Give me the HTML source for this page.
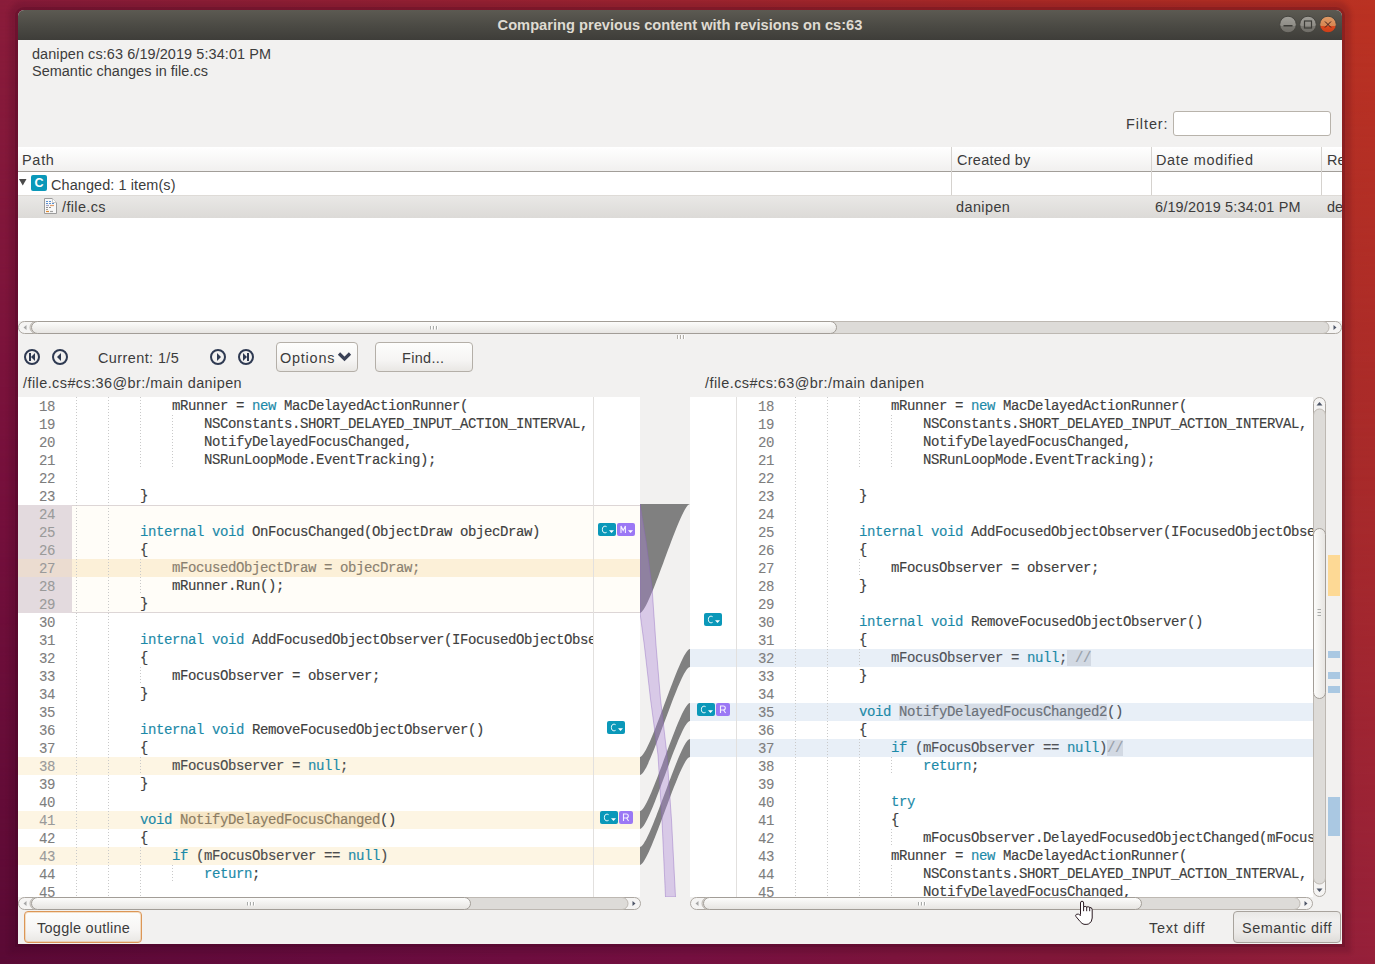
<!DOCTYPE html>
<html><head><meta charset="utf-8">
<style>
*{box-sizing:border-box}
html,body{margin:0;padding:0;width:1375px;height:964px;overflow:hidden}
body{position:relative;font-family:"Liberation Sans",sans-serif;font-size:14.45px;color:#3c3c3c;
 background:linear-gradient(90deg,#5a0a35 0%,#660c3e 25%,#741040 50%,#821838 80%,#96203a 100%)}
#bgm{position:absolute;left:0;top:0;width:1375px;height:964px;background:linear-gradient(90deg,#76103c 0%,#8a1a3a 45%,#9c2430 75%,#a82a2a 100%);
 -webkit-mask-image:linear-gradient(#000 0%,#000 50%,transparent 100%)}
#bgt{position:absolute;left:0;top:0;width:1375px;height:964px;background:linear-gradient(90deg,#8a1c3a 0%,#a22630 50%,#b02c26 75%,#ba3222 100%);
 -webkit-mask-image:linear-gradient(#000 0%,transparent 50%)}
.a{position:absolute;white-space:pre}
#win{position:absolute;left:18px;top:10px;width:1324px;height:934px;background:#f2f1f0;border-radius:6px 6px 0 0;overflow:hidden;
 box-shadow:0 0 0 3px rgba(50,0,20,.18),0 0 4px 9px rgba(50,0,30,.16)}
#title{position:absolute;left:0;top:0;width:1324px;height:30px;background:linear-gradient(#5c5a52,#4c4b45 50%,#3e3d39);}
#title .t{position:absolute;left:0;width:1324px;top:7px;text-align:center;font-weight:bold;font-size:14.66px;color:#dfdbd2;line-height:16px}
.wb{position:absolute;top:7px;width:17px;height:17px;border-radius:50%;border:1px solid #3a3935}
.code,.ln{position:absolute;font-family:"Liberation Mono",monospace;font-size:14px;letter-spacing:-0.4px;line-height:18px;height:18px;white-space:pre;color:#404040;-webkit-text-stroke:0.15px currentColor}
.ln{width:40px;text-align:right;color:#7d7d7d;-webkit-text-stroke:0.1px currentColor}
.lnc{color:#9a9a9a}
.kw{color:#1c8aa8}
.dim{color:#8a8070}
.dimb{color:#505359}
.dimy{color:#4c4c4c}
.hly{background:#f6e6c6;color:#8c7c62}
.hlb{background:#d6dde7;color:#6a7079}
.hlb2{background:#d2d9e3;color:#98a0aa}
.gd{position:absolute;width:1px;height:18px;background:repeating-linear-gradient(#c9c9c9 0 1px,transparent 1px 3px)}
.bgy{position:absolute;height:18px;background:#fdf5e3}
.bgb{position:absolute;height:18px;background:#e8eff7}
.bgy2{position:absolute;height:18px;background:#fcf0d8}
.badge{position:absolute;height:13px;border-radius:2px;color:#fff;font-family:"Liberation Mono",monospace;font-size:11px;line-height:13px}
.bc{background:#0a98b9}
.bm{background:#9b78f5}
.btn{position:absolute;border:1px solid #b4afa8;border-radius:4px;background:linear-gradient(#fdfdfc,#f6f5f4 60%,#e9e7e4)}
.hs{position:absolute;height:13px;border:1px solid #b0aba5;border-radius:7px;background:#dcdad7}
.hs .th{position:absolute;top:-1px;height:13px;border:1px solid #aaa59f;border-radius:7px;background:linear-gradient(#fbfbfa,#ecebe9)}
.hs .arr{position:absolute;top:-1px;height:13px;width:20px;border:1px solid #b8b3ad;background:#f4f3f2}
</style></head><body>
<div id="bgm"></div>
<div id="bgt"></div>
<div id="win">
 <div id="title"><div class="t">Comparing previous content with revisions on cs:63</div>
  <svg class="a" style="left:1258px;top:3px" width="66" height="22" viewBox="0 0 66 22">
  <defs><linearGradient id="gb" x1="0" y1="0" x2="0" y2="1"><stop offset="0" stop-color="#a09e98"/><stop offset="0.6" stop-color="#8e8c86"/><stop offset="0.62" stop-color="#7a7872"/><stop offset="1" stop-color="#6e6c66"/></linearGradient>
  <linearGradient id="gc" x1="0" y1="0" x2="0" y2="1"><stop offset="0" stop-color="#e09a66"/><stop offset="0.58" stop-color="#d68652"/><stop offset="0.62" stop-color="#d94a1f"/><stop offset="1" stop-color="#cc3c17"/></linearGradient></defs>
  <circle cx="12" cy="11.5" r="8.3" fill="url(#gb)" stroke="#45443f" stroke-width="1"/>
  <rect x="7.5" y="12" width="9" height="1.5" fill="#3d3c38"/>
  <circle cx="32" cy="11.5" r="8.3" fill="url(#gb)" stroke="#45443f" stroke-width="1"/>
  <rect x="28.5" y="8" width="7" height="7" fill="none" stroke="#3d3c38" stroke-width="1.2"/>
  <circle cx="52" cy="11.5" r="8.3" fill="url(#gc)" stroke="#45443f" stroke-width="1"/>
  <path d="M49 8.5L55 14.5M55 8.5L49 14.5" stroke="#3a1a1a" stroke-width="1"/>
 </svg>
</div>
</div>

<!-- header text -->
<div class="a" style="left:32px;top:46px;line-height:17px;letter-spacing:0.091px">danipen cs:63 6/19/2019 5:34:01 PM</div>
<div class="a" style="left:32px;top:63px;line-height:17px;letter-spacing:0.038px">Semantic changes in file.cs</div>
<div class="a" style="left:1126px;top:116px;line-height:17px;letter-spacing:0.917px">Filter:</div>
<div class="a" style="left:1173px;top:111px;width:158px;height:25px;background:#fff;border:1px solid #b8b3ab;border-radius:3px"></div>

<!-- table -->
<div class="a" style="left:18px;top:147px;width:1324px;height:174px;background:#fff"></div>
<div class="a" style="left:18px;top:147px;width:1324px;height:25px;background:linear-gradient(#ffffff,#f1f0ef);border-bottom:1px solid #a29e99"></div>
<div class="a" style="left:951px;top:147px;width:1px;height:71px;background:#d5d2ce"></div>
<div class="a" style="left:1151px;top:147px;width:1px;height:71px;background:#d5d2ce"></div>
<div class="a" style="left:1321px;top:147px;width:1px;height:71px;background:#d5d2ce"></div>
<div class="a" style="left:22px;top:152px;line-height:17px;letter-spacing:0.733px">Path</div>
<div class="a" style="left:957px;top:152px;line-height:17px;letter-spacing:0.300px">Created by</div>
<div class="a" style="left:1156px;top:152px;line-height:17px;letter-spacing:0.667px">Date modified</div>
<div class="a" style="left:1327px;top:152px;line-height:17px;width:15px;overflow:hidden">Re</div>
<div class="a" style="left:18px;top:195px;width:1324px;height:1px;background:#dedbd7"></div>
<div class="a" style="left:18px;top:196px;width:1324px;height:22px;background:linear-gradient(#e9e8e6,#dcdad7)"></div>
<svg class="a" style="left:18px;top:178px" width="10" height="9"><path d="M1 1H8.5L4.75 7.5Z" fill="#4a4a4a"/></svg>
<div class="a" style="left:31px;top:175px;width:16px;height:16px;background:#0a98b9;border-radius:2px;color:#fff;font-weight:bold;font-size:12.5px;line-height:16px;text-align:center">C</div>
<div class="a" style="left:51px;top:177px;line-height:17px;letter-spacing:0.100px">Changed: 1 item(s)</div>
<svg class="a" style="left:44px;top:198px" width="13" height="17"><path d="M0.5 0.5H8.5L12.5 4.5V15.5H0.5Z" fill="#f8f8f8" stroke="#9c9c9c"/><path d="M8.5 0.5V4.5H12.5" fill="#fff" stroke="#c8c8c8"/>
 <g stroke-width="1.2"><path d="M2 3.5h2M5 3.5h2" stroke="#5b8fd0"/><path d="M2 5.5h2M5 5.5h2M8 5.5h2" stroke="#5b8fd0"/><path d="M2 7.5h3" stroke="#a8a8c8"/><path d="M6 7.5h4" stroke="#e0a070"/><path d="M2 9.5h2M5 9.5h2" stroke="#909090"/><path d="M2 11.5h2" stroke="#a0a0a0"/><path d="M2 13.5h3" stroke="#e08a30"/><path d="M6 13.5h3" stroke="#a0a0a0"/></g></svg>
<div class="a" style="left:62px;top:199px;line-height:17px;letter-spacing:0.371px">/file.cs</div>
<div class="a" style="left:956px;top:199px;line-height:17px;letter-spacing:0.417px">danipen</div>
<div class="a" style="left:1155px;top:199px;line-height:17px;letter-spacing:0.179px">6/19/2019 5:34:01 PM</div>
<div class="a" style="left:1327px;top:199px;line-height:17px;width:15px;overflow:hidden">de</div>

<svg class="a" style="left:676px;top:334px" width="10" height="6"><g fill="#b1ada7"><rect x="1" y="1" width="1" height="4"/><rect x="4" y="1" width="1" height="4"/><rect x="7" y="1" width="1" height="4"/></g><g fill="#fff"><rect x="2" y="1" width="1" height="4"/><rect x="5" y="1" width="1" height="4"/><rect x="8" y="1" width="1" height="4"/></g></svg>
<!-- toolbar -->
<svg class="a" style="left:20px;top:345px" width="270" height="24" viewBox="0 0 270 24">
 <g fill="none" stroke="#2f3a52" stroke-width="2"><circle cx="12" cy="12" r="7"/><circle cx="40" cy="12" r="7"/><circle cx="198" cy="12" r="7"/><circle cx="226" cy="12" r="7"/></g>
 <g fill="#2f3a52"><rect x="9" y="8" width="2" height="8"/><path d="M15 8v8l-4-4z"/><path d="M41 8v8l-4-4z"/><path d="M197 8v8l4-4z"/><path d="M223 8v8l4-4z"/><rect x="227" y="8" width="2" height="8"/></g>
</svg>
<div class="a" style="left:98px;top:350px;line-height:17px;letter-spacing:0.418px">Current: 1/5</div>
<div class="btn" style="left:276px;top:342px;width:82px;height:30px"></div>
<div class="a" style="left:280px;top:350px;line-height:17px;letter-spacing:0.783px">Options</div>
<svg class="a" style="left:336px;top:349px" width="18" height="14"><path d="M3 4.5L8.5 10L14 4.5" fill="none" stroke="#3a4156" stroke-width="3.2"/></svg>
<div class="btn" style="left:375px;top:342px;width:98px;height:30px"></div>
<div class="a" style="left:402px;top:350px;line-height:17px;letter-spacing:0.333px">Find...</div>

<div class="a" style="left:23px;top:375px;line-height:17px;letter-spacing:0.433px">/file.cs#cs:36@br:/main danipen</div>
<div class="a" style="left:705px;top:375px;line-height:17px;letter-spacing:0.447px">/file.cs#cs:63@br:/main danipen</div>

<!-- left pane -->
<div class="a" style="left:18px;top:397px;width:622px;height:500px;background:#fff;overflow:hidden">
</div>
<div class="a" style="left:18px;top:505px;width:622px;height:108px;background:#fffdf8;border-top:1px solid #ddd6d6;border-bottom:1px solid #ddd6d6"></div>
<div class="a" style="left:18px;top:505px;width:54px;height:108px;background:#e3dade"></div>
<div class="a" style="left:18px;top:559px;width:54px;height:18px;background:#ebdcd0"></div>
<div id="lp" class="a" style="left:0;top:0;width:640px;height:897px;overflow:hidden;clip-path:inset(397px 0 0 18px)">
<div class="bgy2" style="top:559px;left:72px;width:568px"></div>
<div class="bgy" style="top:757px;left:18px;width:622px"></div>
<div class="bgy" style="top:811px;left:18px;width:622px"></div>
<div class="bgy" style="top:847px;left:18px;width:622px"></div>
<div class="gd" style="top:397px;left:76px"></div>
<div class="gd" style="top:397px;left:108px"></div>
<div class="gd" style="top:397px;left:140px"></div>
<div class="gd" style="top:415px;left:76px"></div>
<div class="gd" style="top:415px;left:108px"></div>
<div class="gd" style="top:415px;left:140px"></div>
<div class="gd" style="top:415px;left:172px"></div>
<div class="gd" style="top:433px;left:76px"></div>
<div class="gd" style="top:433px;left:108px"></div>
<div class="gd" style="top:433px;left:140px"></div>
<div class="gd" style="top:433px;left:172px"></div>
<div class="gd" style="top:451px;left:76px"></div>
<div class="gd" style="top:451px;left:108px"></div>
<div class="gd" style="top:451px;left:140px"></div>
<div class="gd" style="top:451px;left:172px"></div>
<div class="gd" style="top:469px;left:76px"></div>
<div class="gd" style="top:469px;left:108px"></div>
<div class="gd" style="top:487px;left:76px"></div>
<div class="gd" style="top:487px;left:108px"></div>
<div class="gd" style="top:505px;left:76px"></div>
<div class="gd" style="top:505px;left:108px"></div>
<div class="gd" style="top:523px;left:76px"></div>
<div class="gd" style="top:523px;left:108px"></div>
<div class="gd" style="top:541px;left:76px"></div>
<div class="gd" style="top:541px;left:108px"></div>
<div class="gd" style="top:559px;left:76px"></div>
<div class="gd" style="top:559px;left:108px"></div>
<div class="gd" style="top:559px;left:140px"></div>
<div class="gd" style="top:577px;left:76px"></div>
<div class="gd" style="top:577px;left:108px"></div>
<div class="gd" style="top:577px;left:140px"></div>
<div class="gd" style="top:595px;left:76px"></div>
<div class="gd" style="top:595px;left:108px"></div>
<div class="gd" style="top:613px;left:76px"></div>
<div class="gd" style="top:613px;left:108px"></div>
<div class="gd" style="top:631px;left:76px"></div>
<div class="gd" style="top:631px;left:108px"></div>
<div class="gd" style="top:649px;left:76px"></div>
<div class="gd" style="top:649px;left:108px"></div>
<div class="gd" style="top:667px;left:76px"></div>
<div class="gd" style="top:667px;left:108px"></div>
<div class="gd" style="top:667px;left:140px"></div>
<div class="gd" style="top:685px;left:76px"></div>
<div class="gd" style="top:685px;left:108px"></div>
<div class="gd" style="top:703px;left:76px"></div>
<div class="gd" style="top:703px;left:108px"></div>
<div class="gd" style="top:721px;left:76px"></div>
<div class="gd" style="top:721px;left:108px"></div>
<div class="gd" style="top:739px;left:76px"></div>
<div class="gd" style="top:739px;left:108px"></div>
<div class="gd" style="top:757px;left:76px"></div>
<div class="gd" style="top:757px;left:108px"></div>
<div class="gd" style="top:757px;left:140px"></div>
<div class="gd" style="top:775px;left:76px"></div>
<div class="gd" style="top:775px;left:108px"></div>
<div class="gd" style="top:793px;left:76px"></div>
<div class="gd" style="top:793px;left:108px"></div>
<div class="gd" style="top:811px;left:76px"></div>
<div class="gd" style="top:811px;left:108px"></div>
<div class="gd" style="top:829px;left:76px"></div>
<div class="gd" style="top:829px;left:108px"></div>
<div class="gd" style="top:847px;left:76px"></div>
<div class="gd" style="top:847px;left:108px"></div>
<div class="gd" style="top:847px;left:140px"></div>
<div class="gd" style="top:865px;left:76px"></div>
<div class="gd" style="top:865px;left:108px"></div>
<div class="gd" style="top:865px;left:140px"></div>
<div class="gd" style="top:865px;left:172px"></div>
<div class="gd" style="top:883px;left:76px"></div>
<div class="gd" style="top:883px;left:108px"></div>
<div class="gd" style="top:883px;left:140px"></div>
<div class="ln" style="top:398px;left:15px">18</div>
<div class="code" style="top:397px;left:76px;width:517px;overflow:hidden">            mRunner = <span class="kw">new</span> MacDelayedActionRunner(</div>
<div class="ln" style="top:416px;left:15px">19</div>
<div class="code" style="top:415px;left:76px;width:517px;overflow:hidden">                NSConstants.SHORT_DELAYED_INPUT_ACTION_INTERVAL,</div>
<div class="ln" style="top:434px;left:15px">20</div>
<div class="code" style="top:433px;left:76px;width:517px;overflow:hidden">                NotifyDelayedFocusChanged,</div>
<div class="ln" style="top:452px;left:15px">21</div>
<div class="code" style="top:451px;left:76px;width:517px;overflow:hidden">                NSRunLoopMode.EventTracking);</div>
<div class="ln" style="top:470px;left:15px">22</div>
<div class="code" style="top:469px;left:76px;width:517px;overflow:hidden"></div>
<div class="ln" style="top:488px;left:15px">23</div>
<div class="code" style="top:487px;left:76px;width:517px;overflow:hidden">        }</div>
<div class="ln lnc" style="top:506px;left:15px">24</div>
<div class="code" style="top:505px;left:76px;width:517px;overflow:hidden"></div>
<div class="ln lnc" style="top:524px;left:15px">25</div>
<div class="code" style="top:523px;left:76px;width:517px;overflow:hidden">        <span class="kw">internal</span> <span class="kw">void</span> OnFocusChanged(ObjectDraw objecDraw)</div>
<div class="ln lnc" style="top:542px;left:15px">26</div>
<div class="code" style="top:541px;left:76px;width:517px;overflow:hidden">        {</div>
<div class="ln lnc" style="top:560px;left:15px">27</div>
<div class="code dim" style="top:559px;left:76px;width:517px;overflow:hidden">            mFocusedObjectDraw = objecDraw;</div>
<div class="ln lnc" style="top:578px;left:15px">28</div>
<div class="code" style="top:577px;left:76px;width:517px;overflow:hidden">            mRunner.Run();</div>
<div class="ln lnc" style="top:596px;left:15px">29</div>
<div class="code" style="top:595px;left:76px;width:517px;overflow:hidden">        }</div>
<div class="ln" style="top:614px;left:15px">30</div>
<div class="code" style="top:613px;left:76px;width:517px;overflow:hidden"></div>
<div class="ln" style="top:632px;left:15px">31</div>
<div class="code" style="top:631px;left:76px;width:517px;overflow:hidden">        <span class="kw">internal</span> <span class="kw">void</span> AddFocusedObjectObserver(IFocusedObjectObserver observer)</div>
<div class="ln" style="top:650px;left:15px">32</div>
<div class="code" style="top:649px;left:76px;width:517px;overflow:hidden">        {</div>
<div class="ln" style="top:668px;left:15px">33</div>
<div class="code" style="top:667px;left:76px;width:517px;overflow:hidden">            mFocusObserver = observer;</div>
<div class="ln" style="top:686px;left:15px">34</div>
<div class="code" style="top:685px;left:76px;width:517px;overflow:hidden">        }</div>
<div class="ln" style="top:704px;left:15px">35</div>
<div class="code" style="top:703px;left:76px;width:517px;overflow:hidden"></div>
<div class="ln" style="top:722px;left:15px">36</div>
<div class="code" style="top:721px;left:76px;width:517px;overflow:hidden">        <span class="kw">internal</span> <span class="kw">void</span> RemoveFocusedObjectObserver()</div>
<div class="ln" style="top:740px;left:15px">37</div>
<div class="code" style="top:739px;left:76px;width:517px;overflow:hidden">        {</div>
<div class="ln lnc" style="top:758px;left:15px">38</div>
<div class="code dimy" style="top:757px;left:76px;width:517px;overflow:hidden">            mFocusObserver = <span class="kw">null</span>;</div>
<div class="ln" style="top:776px;left:15px">39</div>
<div class="code" style="top:775px;left:76px;width:517px;overflow:hidden">        }</div>
<div class="ln" style="top:794px;left:15px">40</div>
<div class="code" style="top:793px;left:76px;width:517px;overflow:hidden"></div>
<div class="ln lnc" style="top:812px;left:15px">41</div>
<div class="code" style="top:811px;left:76px;width:517px;overflow:hidden">        <span class="kw">void</span> <span class="hly">NotifyDelayedFocusChanged</span>()</div>
<div class="ln" style="top:830px;left:15px">42</div>
<div class="code" style="top:829px;left:76px;width:517px;overflow:hidden">        {</div>
<div class="ln lnc" style="top:848px;left:15px">43</div>
<div class="code dimy" style="top:847px;left:76px;width:517px;overflow:hidden">            <span class="kw">if</span> (mFocusObserver == <span class="kw">null</span>)</div>
<div class="ln" style="top:866px;left:15px">44</div>
<div class="code" style="top:865px;left:76px;width:517px;overflow:hidden">                <span class="kw">return</span>;</div>
<div class="ln" style="top:884px;left:15px">45</div>
<div class="code" style="top:883px;left:76px;width:517px;overflow:hidden"></div>
</div>
<div class="a" style="left:593px;top:397px;width:1px;height:500px;background:#e2e0de"></div>
<svg class="a" style="left:598px;top:523px" width="18" height="13"><rect width="18" height="13" rx="2" fill="#0a98b9"/><path d="M8.6 3.7C8.1 3.35 7.5 3.2 6.9 3.2C5.3 3.2 4.4 4.4 4.4 6.5C4.4 8.6 5.3 9.8 6.9 9.8C7.5 9.8 8.1 9.65 8.6 9.3" fill="none" stroke="#f2fbff" stroke-width="1"/><path d="M11 7.3H16L13.5 10Z" fill="#fff"/></svg>
<svg class="a" style="left:617px;top:523px" width="18" height="13"><rect width="18" height="13" rx="2" fill="#9b78f5"/><path d="M4 10V3L6.2 7.5L8.4 3V10" fill="none" stroke="#f4f0ff" stroke-width="1.1"/><path d="M11 7.3H16L13.5 10Z" fill="#fff"/></svg>
<svg class="a" style="left:607px;top:721px" width="18" height="13"><rect width="18" height="13" rx="2" fill="#0a98b9"/><path d="M8.6 3.7C8.1 3.35 7.5 3.2 6.9 3.2C5.3 3.2 4.4 4.4 4.4 6.5C4.4 8.6 5.3 9.8 6.9 9.8C7.5 9.8 8.1 9.65 8.6 9.3" fill="none" stroke="#f2fbff" stroke-width="1"/><path d="M11 7.3H16L13.5 10Z" fill="#fff"/></svg>
<svg class="a" style="left:600px;top:811px" width="18" height="13"><rect width="18" height="13" rx="2" fill="#0a98b9"/><path d="M8.6 3.7C8.1 3.35 7.5 3.2 6.9 3.2C5.3 3.2 4.4 4.4 4.4 6.5C4.4 8.6 5.3 9.8 6.9 9.8C7.5 9.8 8.1 9.65 8.6 9.3" fill="none" stroke="#f2fbff" stroke-width="1"/><path d="M11 7.3H16L13.5 10Z" fill="#fff"/></svg>
<svg class="a" style="left:619px;top:811px" width="14" height="13"><rect width="14" height="13" rx="2" fill="#9b78f5"/><path d="M4.5 10V3H7.3Q9.3 3 9.3 5Q9.3 7 7.3 7H4.5M7.5 7L9.6 10" fill="none" stroke="#f4f0ff" stroke-width="1.1"/></svg>

<!-- connector -->
<svg class="a" style="left:640px;top:397px" width="50" height="500" viewBox="640 397 50 500">
 <path d="M640 504 H690 C680 504 650 613 640 613Z" fill="#808080"/>
 <path d="M640 757 C650 757 680 649 690 649 V667 C680 667 650 775 640 775Z" fill="#808080"/>
 <path d="M640 811 C650 811 680 703 690 703 V721 C680 721 650 829 640 829Z" fill="#808080"/>
 <path d="M640 847 C650 847 680 739 690 739 V757 C680 757 650 865 640 865Z" fill="#808080"/>
 <path d="M640 504 L646 541 L652 587 L656 645 L660.5 699 L667 755 L671.5 820 L675.5 897 H665.5 L662 820 L658 755 L650.5 699 L644.3 645 L640 613Z" fill="rgba(170,130,215,0.36)" stroke="rgba(140,100,190,0.5)" stroke-width="0.8" stroke-linejoin="round"/>
</svg>
<!-- right pane -->
<div class="a" style="left:690px;top:397px;width:623px;height:500px;background:#fff"></div>
<div id="rp" class="a" style="left:0;top:0;width:1313px;height:897px;overflow:hidden;clip-path:inset(397px 0 0 690px)">
<div class="bgb" style="top:649px;left:690px;width:623px"></div>
<div class="bgb" style="top:703px;left:690px;width:623px"></div>
<div class="bgb" style="top:739px;left:690px;width:623px"></div>
<div class="gd" style="top:397px;left:795px"></div>
<div class="gd" style="top:397px;left:827px"></div>
<div class="gd" style="top:397px;left:859px"></div>
<div class="gd" style="top:415px;left:795px"></div>
<div class="gd" style="top:415px;left:827px"></div>
<div class="gd" style="top:415px;left:859px"></div>
<div class="gd" style="top:415px;left:891px"></div>
<div class="gd" style="top:433px;left:795px"></div>
<div class="gd" style="top:433px;left:827px"></div>
<div class="gd" style="top:433px;left:859px"></div>
<div class="gd" style="top:433px;left:891px"></div>
<div class="gd" style="top:451px;left:795px"></div>
<div class="gd" style="top:451px;left:827px"></div>
<div class="gd" style="top:451px;left:859px"></div>
<div class="gd" style="top:451px;left:891px"></div>
<div class="gd" style="top:469px;left:795px"></div>
<div class="gd" style="top:469px;left:827px"></div>
<div class="gd" style="top:487px;left:795px"></div>
<div class="gd" style="top:487px;left:827px"></div>
<div class="gd" style="top:505px;left:795px"></div>
<div class="gd" style="top:505px;left:827px"></div>
<div class="gd" style="top:523px;left:795px"></div>
<div class="gd" style="top:523px;left:827px"></div>
<div class="gd" style="top:541px;left:795px"></div>
<div class="gd" style="top:541px;left:827px"></div>
<div class="gd" style="top:559px;left:795px"></div>
<div class="gd" style="top:559px;left:827px"></div>
<div class="gd" style="top:559px;left:859px"></div>
<div class="gd" style="top:577px;left:795px"></div>
<div class="gd" style="top:577px;left:827px"></div>
<div class="gd" style="top:595px;left:795px"></div>
<div class="gd" style="top:595px;left:827px"></div>
<div class="gd" style="top:613px;left:795px"></div>
<div class="gd" style="top:613px;left:827px"></div>
<div class="gd" style="top:631px;left:795px"></div>
<div class="gd" style="top:631px;left:827px"></div>
<div class="gd" style="top:649px;left:795px"></div>
<div class="gd" style="top:649px;left:827px"></div>
<div class="gd" style="top:649px;left:859px"></div>
<div class="gd" style="top:667px;left:795px"></div>
<div class="gd" style="top:667px;left:827px"></div>
<div class="gd" style="top:685px;left:795px"></div>
<div class="gd" style="top:685px;left:827px"></div>
<div class="gd" style="top:703px;left:795px"></div>
<div class="gd" style="top:703px;left:827px"></div>
<div class="gd" style="top:721px;left:795px"></div>
<div class="gd" style="top:721px;left:827px"></div>
<div class="gd" style="top:739px;left:795px"></div>
<div class="gd" style="top:739px;left:827px"></div>
<div class="gd" style="top:739px;left:859px"></div>
<div class="gd" style="top:757px;left:795px"></div>
<div class="gd" style="top:757px;left:827px"></div>
<div class="gd" style="top:757px;left:859px"></div>
<div class="gd" style="top:757px;left:891px"></div>
<div class="gd" style="top:775px;left:795px"></div>
<div class="gd" style="top:775px;left:827px"></div>
<div class="gd" style="top:775px;left:859px"></div>
<div class="gd" style="top:793px;left:795px"></div>
<div class="gd" style="top:793px;left:827px"></div>
<div class="gd" style="top:793px;left:859px"></div>
<div class="gd" style="top:811px;left:795px"></div>
<div class="gd" style="top:811px;left:827px"></div>
<div class="gd" style="top:811px;left:859px"></div>
<div class="gd" style="top:829px;left:795px"></div>
<div class="gd" style="top:829px;left:827px"></div>
<div class="gd" style="top:829px;left:859px"></div>
<div class="gd" style="top:829px;left:891px"></div>
<div class="gd" style="top:847px;left:795px"></div>
<div class="gd" style="top:847px;left:827px"></div>
<div class="gd" style="top:847px;left:859px"></div>
<div class="gd" style="top:865px;left:795px"></div>
<div class="gd" style="top:865px;left:827px"></div>
<div class="gd" style="top:865px;left:859px"></div>
<div class="gd" style="top:865px;left:891px"></div>
<div class="gd" style="top:883px;left:795px"></div>
<div class="gd" style="top:883px;left:827px"></div>
<div class="gd" style="top:883px;left:859px"></div>
<div class="gd" style="top:883px;left:891px"></div>
<div class="ln" style="top:398px;left:734px">18</div>
<div class="code" style="top:397px;left:795px;width:518px;overflow:hidden">            mRunner = <span class="kw">new</span> MacDelayedActionRunner(</div>
<div class="ln" style="top:416px;left:734px">19</div>
<div class="code" style="top:415px;left:795px;width:518px;overflow:hidden">                NSConstants.SHORT_DELAYED_INPUT_ACTION_INTERVAL,</div>
<div class="ln" style="top:434px;left:734px">20</div>
<div class="code" style="top:433px;left:795px;width:518px;overflow:hidden">                NotifyDelayedFocusChanged,</div>
<div class="ln" style="top:452px;left:734px">21</div>
<div class="code" style="top:451px;left:795px;width:518px;overflow:hidden">                NSRunLoopMode.EventTracking);</div>
<div class="ln" style="top:470px;left:734px">22</div>
<div class="code" style="top:469px;left:795px;width:518px;overflow:hidden"></div>
<div class="ln" style="top:488px;left:734px">23</div>
<div class="code" style="top:487px;left:795px;width:518px;overflow:hidden">        }</div>
<div class="ln" style="top:506px;left:734px">24</div>
<div class="code" style="top:505px;left:795px;width:518px;overflow:hidden"></div>
<div class="ln" style="top:524px;left:734px">25</div>
<div class="code" style="top:523px;left:795px;width:518px;overflow:hidden">        <span class="kw">internal</span> <span class="kw">void</span> AddFocusedObjectObserver(IFocusedObjectObserver observer)</div>
<div class="ln" style="top:542px;left:734px">26</div>
<div class="code" style="top:541px;left:795px;width:518px;overflow:hidden">        {</div>
<div class="ln" style="top:560px;left:734px">27</div>
<div class="code" style="top:559px;left:795px;width:518px;overflow:hidden">            mFocusObserver = observer;</div>
<div class="ln" style="top:578px;left:734px">28</div>
<div class="code" style="top:577px;left:795px;width:518px;overflow:hidden">        }</div>
<div class="ln" style="top:596px;left:734px">29</div>
<div class="code" style="top:595px;left:795px;width:518px;overflow:hidden"></div>
<div class="ln" style="top:614px;left:734px">30</div>
<div class="code" style="top:613px;left:795px;width:518px;overflow:hidden">        <span class="kw">internal</span> <span class="kw">void</span> RemoveFocusedObjectObserver()</div>
<div class="ln" style="top:632px;left:734px">31</div>
<div class="code" style="top:631px;left:795px;width:518px;overflow:hidden">        {</div>
<div class="ln" style="top:650px;left:734px">32</div>
<div class="code dimb" style="top:649px;left:795px;width:518px;overflow:hidden">            mFocusObserver = <span class="kw">null</span>;<span class="hlb2"> //</span></div>
<div class="ln" style="top:668px;left:734px">33</div>
<div class="code" style="top:667px;left:795px;width:518px;overflow:hidden">        }</div>
<div class="ln" style="top:686px;left:734px">34</div>
<div class="code" style="top:685px;left:795px;width:518px;overflow:hidden"></div>
<div class="ln" style="top:704px;left:734px">35</div>
<div class="code dimb" style="top:703px;left:795px;width:518px;overflow:hidden">        <span class="kw">void</span> <span class="hlb">NotifyDelayedFocusChanged2</span>()</div>
<div class="ln" style="top:722px;left:734px">36</div>
<div class="code" style="top:721px;left:795px;width:518px;overflow:hidden">        {</div>
<div class="ln" style="top:740px;left:734px">37</div>
<div class="code dimb" style="top:739px;left:795px;width:518px;overflow:hidden">            <span class="kw">if</span> (mFocusObserver == <span class="kw">null</span>)<span class="hlb2">//</span></div>
<div class="ln" style="top:758px;left:734px">38</div>
<div class="code" style="top:757px;left:795px;width:518px;overflow:hidden">                <span class="kw">return</span>;</div>
<div class="ln" style="top:776px;left:734px">39</div>
<div class="code" style="top:775px;left:795px;width:518px;overflow:hidden"></div>
<div class="ln" style="top:794px;left:734px">40</div>
<div class="code" style="top:793px;left:795px;width:518px;overflow:hidden">            <span class="kw">try</span></div>
<div class="ln" style="top:812px;left:734px">41</div>
<div class="code" style="top:811px;left:795px;width:518px;overflow:hidden">            {</div>
<div class="ln" style="top:830px;left:734px">42</div>
<div class="code" style="top:829px;left:795px;width:518px;overflow:hidden">                mFocusObserver.DelayedFocusedObjectChanged(mFocusObserver)</div>
<div class="ln" style="top:848px;left:734px">43</div>
<div class="code" style="top:847px;left:795px;width:518px;overflow:hidden">            mRunner = <span class="kw">new</span> MacDelayedActionRunner(</div>
<div class="ln" style="top:866px;left:734px">44</div>
<div class="code" style="top:865px;left:795px;width:518px;overflow:hidden">                NSConstants.SHORT_DELAYED_INPUT_ACTION_INTERVAL,</div>
<div class="ln" style="top:884px;left:734px">45</div>
<div class="code" style="top:883px;left:795px;width:518px;overflow:hidden">                NotifyDelayedFocusChanged,</div>
</div>
<div class="a" style="left:736px;top:397px;width:1px;height:500px;background:#e2e0de"></div>
<svg class="a" style="left:704px;top:613px" width="18" height="13"><rect width="18" height="13" rx="2" fill="#0a98b9"/><path d="M8.6 3.7C8.1 3.35 7.5 3.2 6.9 3.2C5.3 3.2 4.4 4.4 4.4 6.5C4.4 8.6 5.3 9.8 6.9 9.8C7.5 9.8 8.1 9.65 8.6 9.3" fill="none" stroke="#f2fbff" stroke-width="1"/><path d="M11 7.3H16L13.5 10Z" fill="#fff"/></svg>
<svg class="a" style="left:697px;top:703px" width="18" height="13"><rect width="18" height="13" rx="2" fill="#0a98b9"/><path d="M8.6 3.7C8.1 3.35 7.5 3.2 6.9 3.2C5.3 3.2 4.4 4.4 4.4 6.5C4.4 8.6 5.3 9.8 6.9 9.8C7.5 9.8 8.1 9.65 8.6 9.3" fill="none" stroke="#f2fbff" stroke-width="1"/><path d="M11 7.3H16L13.5 10Z" fill="#fff"/></svg>
<svg class="a" style="left:716px;top:703px" width="14" height="13"><rect width="14" height="13" rx="2" fill="#9b78f5"/><path d="M4.5 10V3H7.3Q9.3 3 9.3 5Q9.3 7 7.3 7H4.5M7.5 7L9.6 10" fill="none" stroke="#f4f0ff" stroke-width="1.1"/></svg>

<!-- vscroll -->
<div class="a" style="left:1328px;top:555px;width:12px;height:41px;background:#fdd995"></div>
<div class="a" style="left:1328px;top:651px;width:12px;height:7px;background:#aac8e2"></div>
<div class="a" style="left:1328px;top:672px;width:12px;height:7px;background:#aac8e2"></div>
<div class="a" style="left:1328px;top:686px;width:12px;height:7px;background:#aac8e2"></div>
<div class="a" style="left:1328px;top:797px;width:12px;height:39px;background:#aac8e2"></div>

<svg width="0" height="0" style="position:absolute"><defs><linearGradient id="thg" x1="0" y1="0" x2="0" y2="1"><stop offset="0" stop-color="#fdfdfc"/><stop offset="1" stop-color="#e6e4e1"/></linearGradient><linearGradient id="tvg" x1="0" y1="0" x2="1" y2="0"><stop offset="0" stop-color="#fdfdfc"/><stop offset="1" stop-color="#e6e4e1"/></linearGradient></defs></svg>
<svg class="a" style="left:18px;top:321px" width="1324" height="13" viewBox="0 0 1324 13"><rect x="0.5" y="0.5" width="1323" height="12" rx="6" fill="#f5f4f3" stroke="#aca7a1"/><rect x="12" y="0.5" width="1299" height="12" rx="6" fill="#dddbd8" stroke="#bdb8b2"/><rect x="13.5" y="0.5" width="805" height="12" rx="6" fill="url(#thg)" stroke="#a29d97"/><g fill="#a9aba9"><rect x="412" y="5" width="1" height="3.5"/><rect x="415" y="5" width="1" height="3.5"/><rect x="418" y="5" width="1" height="3.5"/></g><g fill="#fff"><rect x="413" y="5" width="1" height="3.5"/><rect x="416" y="5" width="1" height="3.5"/><rect x="419" y="5" width="1" height="3.5"/></g><path d="M5.5 6.5L8.5 4V9Z" fill="#a6a6a6"/><path d="M1318.5 6.5L1315.5 4V9Z" fill="#4e5668"/></svg>
<svg class="a" style="left:18px;top:897px" width="623" height="13" viewBox="0 0 623 13"><rect x="0.5" y="0.5" width="622" height="12" rx="6" fill="#f5f4f3" stroke="#aca7a1"/><rect x="12" y="0.5" width="598" height="12" rx="6" fill="#dddbd8" stroke="#bdb8b2"/><rect x="13.5" y="0.5" width="439" height="12" rx="6" fill="url(#thg)" stroke="#a29d97"/><g fill="#a9aba9"><rect x="229" y="5" width="1" height="3.5"/><rect x="232" y="5" width="1" height="3.5"/><rect x="235" y="5" width="1" height="3.5"/></g><g fill="#fff"><rect x="230" y="5" width="1" height="3.5"/><rect x="233" y="5" width="1" height="3.5"/><rect x="236" y="5" width="1" height="3.5"/></g><path d="M5.5 6.5L8.5 4V9Z" fill="#a6a6a6"/><path d="M617.5 6.5L614.5 4V9Z" fill="#4e5668"/></svg>
<svg class="a" style="left:690px;top:897px" width="623" height="13" viewBox="0 0 623 13"><rect x="0.5" y="0.5" width="622" height="12" rx="6" fill="#f5f4f3" stroke="#aca7a1"/><rect x="12" y="0.5" width="598" height="12" rx="6" fill="#dddbd8" stroke="#bdb8b2"/><rect x="13.5" y="0.5" width="438" height="12" rx="6" fill="url(#thg)" stroke="#a29d97"/><g fill="#a9aba9"><rect x="228" y="5" width="1" height="3.5"/><rect x="231" y="5" width="1" height="3.5"/><rect x="234" y="5" width="1" height="3.5"/></g><g fill="#fff"><rect x="229" y="5" width="1" height="3.5"/><rect x="232" y="5" width="1" height="3.5"/><rect x="235" y="5" width="1" height="3.5"/></g><path d="M5.5 6.5L8.5 4V9Z" fill="#a6a6a6"/><path d="M617.5 6.5L614.5 4V9Z" fill="#4e5668"/></svg>
<svg class="a" style="left:1313px;top:397px" width="13" height="500" viewBox="0 0 13 500"><rect x="0.5" y="0.5" width="12" height="499" rx="6" fill="#f5f4f3" stroke="#aca7a1"/><rect x="0.5" y="12" width="12" height="475" rx="6" fill="#dddbd8" stroke="#bdb8b2"/><rect x="0.5" y="131.5" width="12" height="170" rx="6" fill="url(#tvg)" stroke="#a29d97"/><g fill="#a9aba9"><rect x="4.5" y="212" width="3.5" height="1"/><rect x="4.5" y="215" width="3.5" height="1"/><rect x="4.5" y="218" width="3.5" height="1"/></g><path d="M6.5 5L3.5 8.5H9.5Z" fill="#4e5668"/><path d="M6.5 495 L3.5 491.5 H9.5Z" fill="#4e5668"/></svg>
<!-- bottom buttons -->
<div class="btn" style="left:24px;top:911px;width:118px;height:32px;border-color:#dc9656;box-shadow:inset 0 0 0 1px rgba(230,170,100,.35)"></div>
<div class="a" style="left:37px;top:920px;line-height:17px;letter-spacing:0.292px">Toggle outline</div>
<div class="a" style="left:1149px;top:920px;line-height:17px;letter-spacing:0.750px">Text diff</div>
<div class="btn" style="left:1233px;top:911px;width:108px;height:32px;border-color:#a8a39d;background:linear-gradient(#e9e8e6,#f0efee 25%,#ebe9e7 70%,#dedcd9)"></div>
<div class="a" style="left:1242px;top:920px;line-height:17px;letter-spacing:0.533px">Semantic diff</div>
<svg class="a" style="left:1074px;top:900px" width="22" height="27" viewBox="0 0 22 27"><path d="M6.5 14.5V3Q6.5 1.2 8 1.2Q9.6 1.2 9.6 3V6.8Q11.2 5.9 12.7 7Q14.2 6.3 15.7 7.4Q18.2 7.3 18.2 9.8V18Q18.2 22.3 14.3 24.1Q12 24.6 10 24.3Q8 23.9 6.2 21.6L2 16.6Q1 15 2.6 14.2Q4.5 13.5 6.5 15.5Z" fill="#fff" stroke="#2b1b22" stroke-width="1"/><path d="M9.6 6.8V11.2M12.7 7V11.2M15.7 7.4V11.2" stroke="#2b1b22" stroke-width="1" fill="none"/></svg>
</body></html>
